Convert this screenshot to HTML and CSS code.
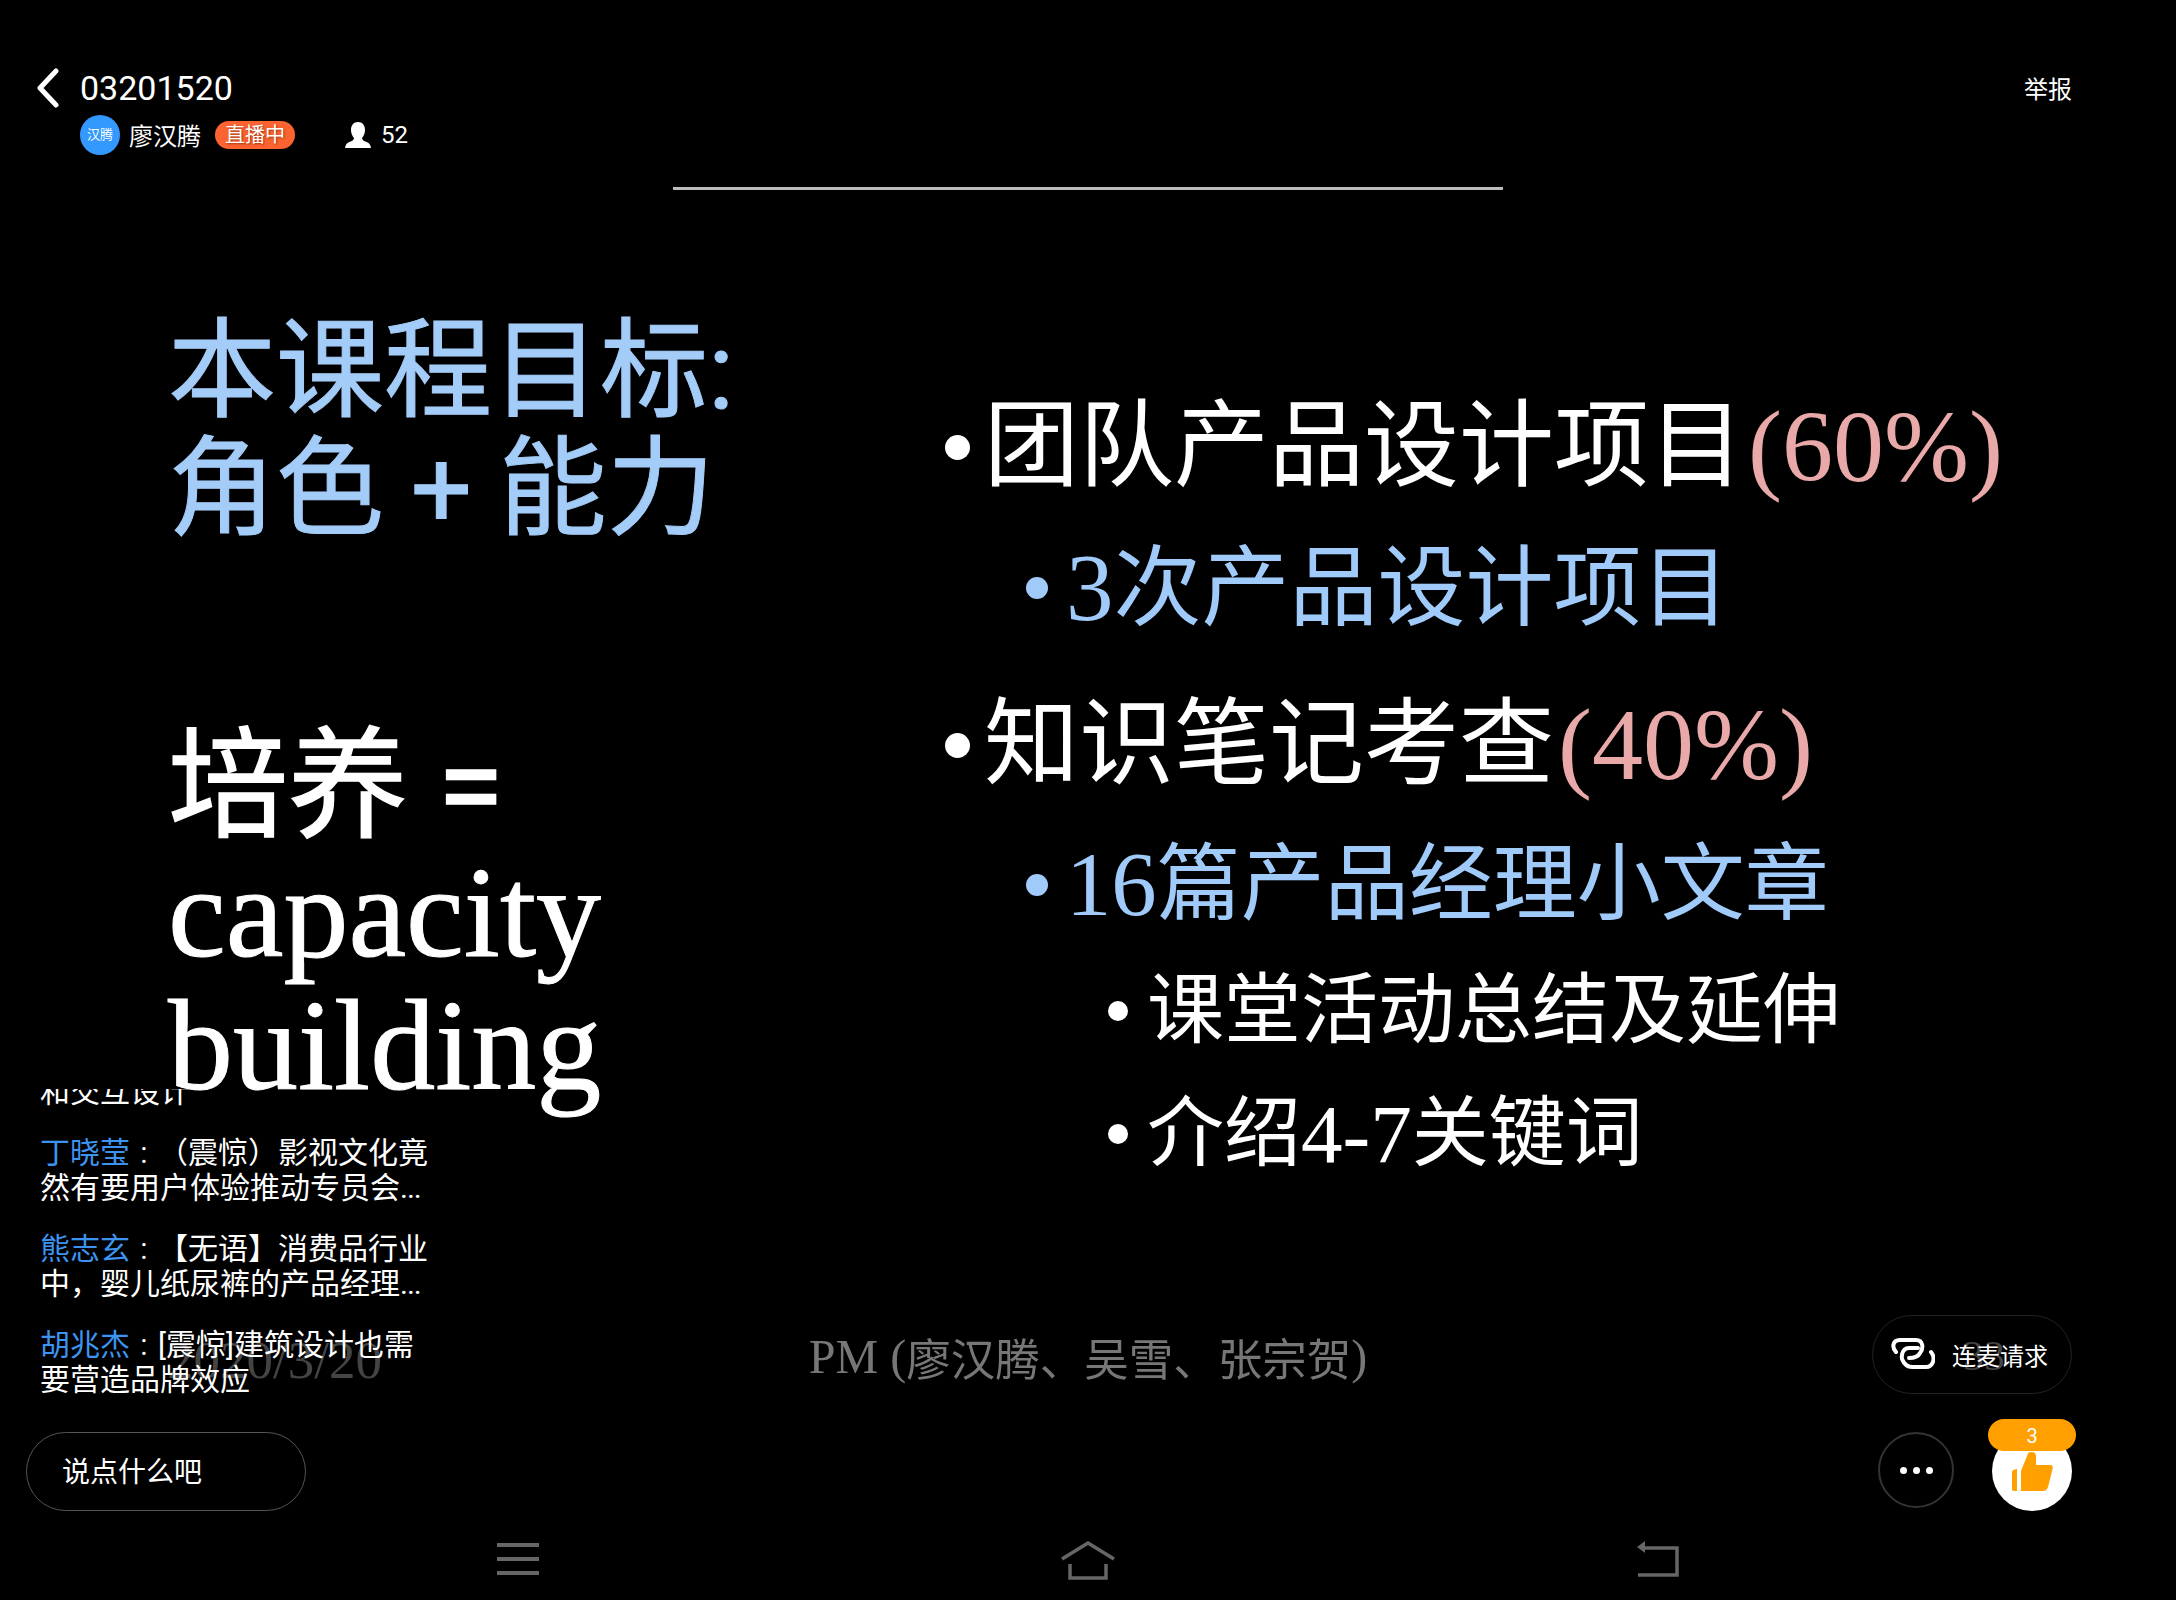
FILE: index.html
```html
<!DOCTYPE html>
<html lang="zh-CN">
<head>
    <meta charset="UTF-8">
    <meta name="viewport" content="width=device-width, initial-scale=1.0">
    <title>03201520</title>
    <link rel="stylesheet" href="styles.css">
</head>
<body>
    <div class="screen">
        <header class="topbar">
            <div class="title-row">
                <svg class="back-icon" viewBox="0 0 24 40" width="24" height="40">
                    <path d="M19 3 L3 20 L19 37" fill="none" stroke="#fff" stroke-width="5" stroke-linecap="round" stroke-linejoin="round"/>
                </svg>
                <span class="title">03201520</span>
                <span class="report">举报</span>
            </div>
            <div class="host-row">
                <span class="avatar">汉腾</span>
                <span class="host-name">廖汉腾</span>
                <span class="live-badge">直播中</span>
                <svg class="person-icon" viewBox="0 0 26 26" width="26" height="26">
                    <path d="M13 0 C17.5 0 20 3.4 20 8 C20 11.5 18.6 14 17 16 C17 18 19 19 21.5 20 C24 21 25.5 22.5 26 26 H0 C.5 22.5 2 21 4.5 20 C7 19 9 18 9 16 C7.4 14 6 11.5 6 8 C6 3.4 8.500 0 13 0 Z" fill="#fff"/>
                </svg>
                <span class="viewers">52</span>
            </div>
        </header>

        <main class="slide">
            <div class="slide-rule"></div>
            <div class="slide-body">
                <section class="slide-left">
                    <h1 class="goal">本课程目标:<br>角色 + 能力</h1>
                    <p class="train">培养 =</p>
                    <p class="train-en">capacity<br>building</p>
                </section>
                <section class="slide-right">
                    <div class="point level-1"><i class="dot"></i>团队产品设计项目<span class="weight">(60%)</span></div>
                    <div class="point level-2 wide gap-a"><i class="dot"></i><span class="num">3</span>次产品设计项目</div>
                    <div class="point level-1 gap-b"><i class="dot"></i>知识笔记考查<span class="weight">(40%)</span></div>
                    <div class="point level-2 gap-e"><i class="dot"></i><span class="num">16</span>篇产品经理小文章</div>
                    <div class="point level-3 gap-c"><i class="dot"></i>课堂活动总结及延伸</div>
                    <div class="point level-3 gap-d"><i class="dot"></i>介绍<span class="num">4-7</span>关键词</div>
                </section>
            </div>
            <div class="slide-foot">
                <span class="foot-date">2020/3/20</span>
                <span class="foot-names"><span class="num">PM (</span>廖汉腾、吴雪、张宗贺<span class="num">)</span></span>
                <span class="foot-page">33</span>
            </div>
        </main>

        <nav class="navbar">
            <svg viewBox="0 0 42 36" width="42" height="36">
                <path d="M0 4 H42 M0 18 H42 M0 32 H42" stroke="#666" stroke-width="4" fill="none"/>
            </svg>
            <svg viewBox="0 0 56 40" width="56" height="40">
                <path d="M2 18 L28 2 L54 18 M10 23 V37 H46 V23" stroke="#666" stroke-width="3.500" fill="none"/>
            </svg>
            <svg viewBox="0 0 42 36" width="42" height="36">
                <path d="M1 34 H40 V7 H7" stroke="#666" stroke-width="3.500" fill="none"/>
                <path d="M0 6 L8 0 V12 Z" fill="#666"/>
            </svg>
        </nav>

        <div class="chat">
            <div class="chat-list">
                <p class="chat-msg">和交互设计</p>
                <p class="chat-msg"><span class="chat-user">丁晓莹</span><span class="chat-colon">:</span>（震惊）影视文化竟<br>然有要用户体验推动专员会<span class="more">...</span></p>
                <p class="chat-msg"><span class="chat-user">熊志玄</span><span class="chat-colon">:</span>【无语】消费品行业<br>中，婴儿纸尿裤的产品经理<span class="more">...</span></p>
                <p class="chat-msg"><span class="chat-user">胡兆杰</span><span class="chat-colon">:</span>[震惊]建筑设计也需<br>要营造品牌效应</p>
            </div>
            <div class="chat-input">说点什么吧</div>
        </div>

        <div class="actions">
            <div class="mic-btn">
                <svg viewBox="0 0 44 33" width="44" height="33">
                    <path d="M5 14 C1 10 1 2 9 2 H25 C32 2 33 10 29 15 C27 19 23 20 18 20" fill="none" stroke="#fff" stroke-width="4" stroke-linecap="round"/>
                    <path d="M27 10 H18 C13 10 10 15 11 21 C13 26 17 29 21 29 H35 C42 29 45 20 40 14" fill="none" stroke="#fff" stroke-width="4" stroke-linecap="round"/>
                </svg>
                <span>连麦请求</span>
            </div>
            <div class="round-row">
                <div class="more-btn"><i></i><i></i><i></i></div>
                <div class="like-btn">
                    <span class="like-count">3</span>
                    <svg viewBox="0 0 41 40" width="41" height="40">
                        <path d="M5 18 V40 H2 C.5 40 0 39 0 38 V21 C0 19 2 18.500 5 18 Z M9 40 V20 L16.300 1.700 C20 0 24 1 24 5 V14 H38 C40 14 41 15 40.700 17.300 L36.300 35 C35.500 38.500 33.500 40 31 40 Z" fill="#ff9f00"/>
                    </svg>
                </div>
            </div>
        </div>
    </div>
</body>
</html>
```

FILE: styles.css
```css
* {
    box-sizing: border-box;
}
body {
    margin: 0;
    background-color: #000;
    color: #fff;
    font-family: Roboto, "Noto Sans CJK SC", sans-serif;
}
p, h1 {
    margin: 0;
    font-weight: 400;
}
.screen {
    position: relative;
    width: 2176px;
    height: 1600px;
    overflow: hidden;
    display: flex;
    flex-direction: column;
}

/* top bar */
.topbar {
    height: 187px;
    padding: 68px 104px 0 37px;
    flex: none;
}
.title-row {
    display: flex;
    align-items: center;
    height: 40px;
}
.back-icon {
    margin-right: 19px;
}
.title {
    font-size: 34px;
}
.report {
    margin: -2px 0 0 auto;
    font-size: 24px;
}
.host-row {
    display: flex;
    align-items: center;
    margin-top: 7px;
    padding-left: 43px;
    height: 40px;
}
.avatar {
    width: 40px;
    height: 40px;
    border-radius: 50%;
    background-color: #3399ff;
    font-size: 13px;
    line-height: 40px;
    text-align: center;
}
.host-name {
    margin: -2px 0 0 9px;
    font-size: 24px;
}
.live-badge {
    margin-left: 14px;
    width: 80px;
    height: 28px;
    border-radius: 14px;
    background-color: #fb6330;
    font-size: 20px;
    line-height: 28px;
    text-align: center;
    text-shadow: 1px 1px 2px rgba(120, 40, 10, 0.7);
}
.person-icon {
    margin-left: 50px;
}
.viewers {
    margin-left: 10px;
    font-size: 24px;
}

/* the slide in the video */
.slide {
    flex: 1;
    display: flex;
    flex-direction: column;
    filter: blur(0.5px);
}
.slide-rule {
    width: 830px;
    height: 3px;
    margin: 0 auto;
    background-color: #bbb;
}
.slide-body {
    flex: 1;
    display: grid;
    grid-template-columns: 945px 1fr;
}
.slide-left {
    padding: 122px 0 0 168px;
}
.goal {
    font-size: 108px;
    line-height: 118px;
    color: #a4ccf8;
    white-space: nowrap;
    -webkit-text-stroke: 1px #a4ccf8;
}
.train {
    margin-top: 174px;
    font-size: 120px;
    line-height: 130px;
    -webkit-text-stroke: 1.5px #fff;
}
.train-en {
    margin-top: -6px;
    font-family: "Liberation Serif", serif;
    font-size: 130px;
    line-height: 133px;
    -webkit-text-stroke: 1px #fff;
}
.slide-right {
    padding-top: 195px;
}
.point {
    display: flex;
    align-items: center;
    white-space: nowrap;
}
.dot {
    flex: none;
    border-radius: 50%;
    background-color: currentColor;
}
.level-1 {
    font-size: 95px;
    line-height: 124px;
}
.level-1 .dot {
    width: 25px;
    height: 25px;
    margin-right: 14px;
}
.level-2 {
    margin-left: 81px;
    font-size: 84px;
    line-height: 108px;
    color: #a0caf9;
}
.level-2.wide {
    font-size: 88px;
}
.level-2 .dot {
    width: 22px;
    height: 22px;
    margin-right: 18px;
}
.level-3 {
    margin-left: 163px;
    font-size: 77px;
    line-height: 100px;
}
.level-3 .dot {
    width: 20px;
    height: 20px;
    margin-right: 19px;
}
.gap-a {
    margin-top: 25px;
}
.gap-b {
    margin-top: 41px;
}
.gap-c {
    margin-top: 22px;
}
.gap-d {
    margin-top: 23px;
}
.gap-e {
    margin-top: 24px;
}
.num, .weight {
    font-family: "Liberation Serif", serif;
}
.num {
    font-size: 1.08em;
}
.weight {
    margin-left: 4px;
    font-size: 102px;
    color: #e9a9a9;
}
.slide-foot {
    height: 190px;
    padding-bottom: 98px;
    display: grid;
    grid-template-columns: 167px 642px 558px 596px 1fr;
    align-items: center;
}
.foot-date {
    grid-column: 2;
    margin-top: 8px;
    font-family: "Liberation Serif", serif;
    font-size: 53px;
    color: #444;
}
.foot-names {
    grid-column: 3;
    display: flex;
    justify-content: center;
    align-items: center;
    font-size: 44.5px;
    color: #777;
    white-space: nowrap;
}
.foot-page {
    grid-column: 5;
    font-family: "Liberation Serif", serif;
    font-size: 42px;
    color: #444;
}

/* android nav bar */
.navbar {
    flex: none;
    height: 100px;
    padding: 41px 497px 0;
    display: flex;
    justify-content: space-between;
    align-items: flex-start;
}

/* chat overlay */
.chat {
    position: absolute;
    left: 26px;
    bottom: 89px;
    width: 420px;
}
.chat-list {
    height: 308px;
    padding-left: 14px;
    overflow: hidden;
    display: flex;
    flex-direction: column;
    justify-content: flex-end;
    gap: 26px;
}
.chat-msg {
    flex: none;
    font-size: 30px;
    line-height: 35px;
}
.chat-user {
    color: #3d94f0;
}
.chat-colon {
    display: inline-block;
    width: 28px;
    text-align: center;
}
.more {
    letter-spacing: -1px;
}
.chat-input {
    width: 280px;
    height: 79px;
    margin-top: 35px;
    padding-left: 35px;
    border: 1px solid #555;
    border-radius: 40px;
    font-size: 28px;
    line-height: 79px;
}

/* floating buttons */
.actions {
    position: absolute;
    right: 104px;
    bottom: 89px;
    width: 200px;
}
.mic-btn {
    height: 79px;
    padding-left: 18px;
    border: 1px solid #222;
    border-radius: 40px;
    display: flex;
    align-items: center;
    font-size: 24px;
}
.mic-btn span {
    margin-left: 17px;
}
.round-row {
    margin-top: 37px;
    padding-left: 6px;
    display: flex;
    justify-content: space-between;
    align-items: center;
}
.more-btn {
    width: 76px;
    height: 76px;
    margin-top: -2px;
    border: 2px solid #333;
    border-radius: 50%;
    display: flex;
    justify-content: center;
    align-items: center;
    gap: 6px;
}
.more-btn i {
    width: 7px;
    height: 7px;
    border-radius: 50%;
    background-color: #fff;
}
.like-btn {
    position: relative;
    width: 80px;
    height: 80px;
    border-radius: 50%;
    background-color: #fff;
    display: flex;
    justify-content: center;
    padding-top: 20px;
}
.like-count {
    position: absolute;
    left: -4px;
    top: -12px;
    width: 88px;
    height: 32px;
    border-radius: 16px;
    background-color: #ff9f00;
    font-size: 20px;
    line-height: 34px;
    text-align: center;
    z-index: 1;
}
```
